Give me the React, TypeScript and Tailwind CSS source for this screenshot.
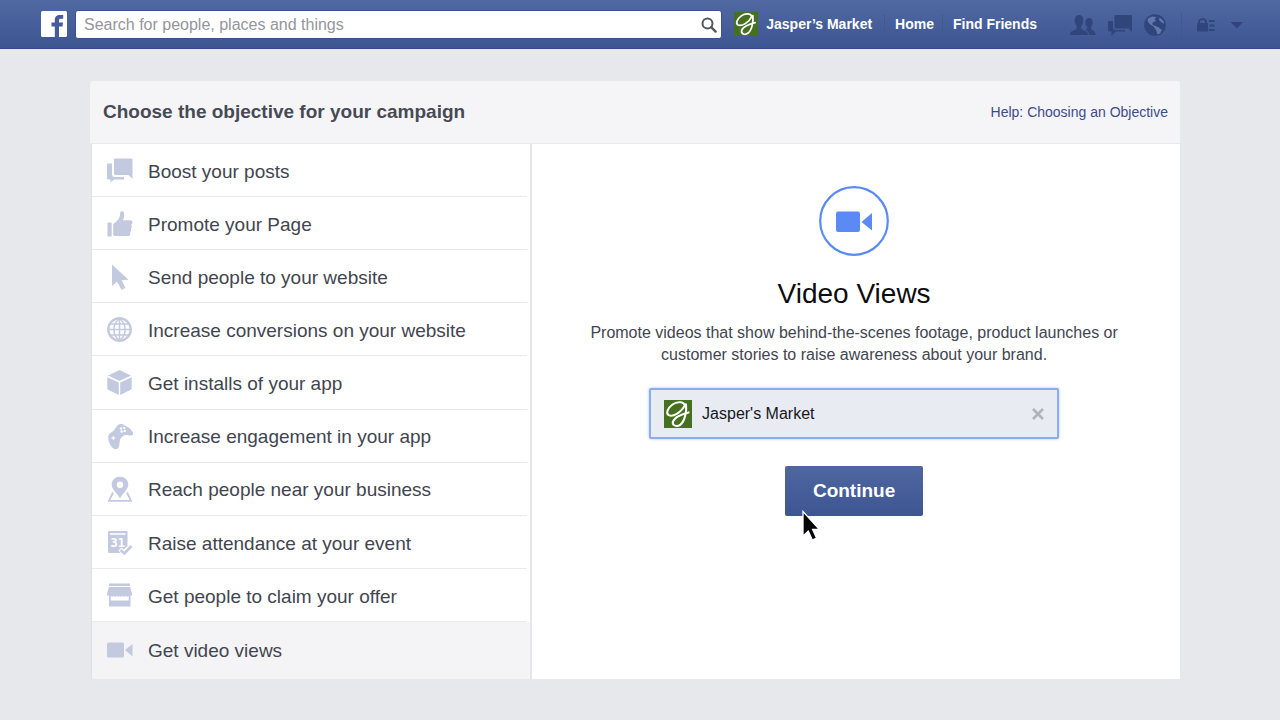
import type { ReactNode } from "react";

function Glyph({ children, className = "h-7 w-7" }: { children: ReactNode; className?: string }) {
  return (
    <svg viewBox="0 0 28 28" className={className} fill="currentColor" aria-hidden="true">
      {children}
    </svg>
  );
}

function MarketLogo({ className }: { className: string }) {
  return (
    <svg viewBox="0 0 28 28" className={className} aria-hidden="true">
      <rect width="28" height="28" fill="#44701f" />
      <path
        d="M20.800 6.200C20.500 1.600 13.500 .8 8.500 4.500C3 8.500 1.800 13.800 4.800 15.200C9 17 17.600 12.400 20.800 5.200"
        fill="none" stroke="#fff" strokeWidth="2" strokeLinecap="round"
      />
      <path
        d="M22 4.300C22.800 11 21 21 16.500 24.600C12.600 27.400 7.800 25.600 9 21.400C10.400 17.400 16 14.600 24.600 12.400"
        fill="none" stroke="#fff" strokeWidth="2.100" strokeLinecap="round"
      />
    </svg>
  );
}

const posts = (
  <Glyph>
    <path d="M8.500 1.500H25.500Q26.500 1.500 26.500 2.500V22L22.500 18H9.500Q8 18 8 16.500V2.500Q8 1.500 8.500 1.500Z" />
    <path d="M2 6.500H6V17.500Q6 20 8.500 20H18V22.500H8L4.500 25.500V22.500H2Q1 22.500 1 21.500V7.500Q1 6.500 2 6.500Z" />
  </Glyph>
);
const thumb = (
  <Glyph>
    <rect x="1.500" y="12.500" width="4.200" height="14" rx=".5" />
    <path d="M7.200 14C11 11.500 14 8 14 4.500C14 1.500 15 .8 16.600 1.300C19 2.500 18.500 7 17 10.200H24.500Q26.700 10.400 26.500 12.500Q26.400 14 25.200 14.700Q26.700 17 25 18.500Q25.700 21 24.200 22.200Q24.800 25.500 22.300 26H8.500L7.200 25Z" />
  </Glyph>
);
const pointer = (
  <Glyph>
    <path d="M6 1.500V23L11 18.500L15.500 26.800L19.500 25L15.600 17.300L22.500 16.800Z" />
  </Glyph>
);
const globe = (
  <Glyph>
    <circle cx="13.500" cy="13.500" r="11.200" fill="none" stroke="currentColor" strokeWidth="2.400" />
    <path d="M13.500 2.500V24.500M2.500 13.500H24.500M4.500 8H22.500M4.500 19H22.500M13.500 2.500C6 8 6 19 13.500 24.500C21 19 21 8 13.500 2.500" fill="none" stroke="currentColor" strokeWidth="1.500" />
  </Glyph>
);
const cube = (
  <Glyph>
    <path d="M13.500 1L25 6.600L13.500 12L2 6.600Z" />
    <path d="M1.300 8.200L12.800 13.500V26L2.200 20.800Q1.300 20.300 1.300 19.300Z" />
    <path d="M25.700 8.200L14.200 13.500V26L24.800 20.800Q25.700 20.300 25.700 19.300Z" />
  </Glyph>
);
const gamepad = (
  <Glyph>
    <path
      fillRule="evenodd"
      d="M11 3C13 .5 16.500 .5 18.500 2.500C22 3.500 26.500 7 27.200 10.500C27 13 24 12.800 21 12C18 11.700 15.500 13.500 14 16.500C13.500 20 13.500 25.500 10.500 26.200C6 26.500 2.500 20 2.300 15.500C1.800 12.500 3.300 10 6 9C8.300 7.500 9.500 5 11 3ZM7 12.500L6.500 14.300L4.700 15L6.500 15.800L7.200 17.600L8.200 15.800L10 15L8.200 14.200Z"
    />
    <g fill="#fff">
      <circle cx="15" cy="5.500" r="1.200" /><circle cx="18.200" cy="5" r="1.200" />
      <circle cx="15.600" cy="8.500" r="1.200" /><circle cx="18.700" cy="8" r="1.200" />
    </g>
  </Glyph>
);
const pin = (
  <Glyph>
    <path fillRule="evenodd" d="M14 .8C9 .8 5.700 4.300 5.700 8.600C5.700 13.800 11.500 17.500 14 22.500C16.500 17.500 22.300 13.800 22.300 8.600C22.300 4.300 19 .8 14 .8ZM14 5.500A3.200 3.200 0 1 1 14 11.900A3.200 3.200 0 1 1 14 5.500Z" />
    <path d="M7 16.500L3 24.800H25L21 16.500" fill="none" stroke="currentColor" strokeWidth="1.800" />
  </Glyph>
);
const calendar = (
  <Glyph>
    <path d="M3 2H20.500Q21.500 2 21.500 3V17L17.500 20.500L15.500 18.500L12.500 21.500L14.500 24H3Q2 24 2 23V3Q2 2 3 2Z" />
    <path d="M14.500 21L18.500 24.500L25.500 17" fill="none" stroke="currentColor" strokeWidth="2.600" />
    <path d="M4 5H19.500" stroke="#fff" strokeWidth="1.600" />
    <text x="4.500" y="18" fill="#fff" fontFamily="DejaVu Sans Mono" fontWeight="700" fontSize="12">31</text>
  </Glyph>
);
const shop = (
  <Glyph>
    <path d="M3 1.500H24V4H3ZM3 5H24L26 11.500V13.500H24.500V24.500H3V13.500H1V11.500Z" />
    <path d="M4.700 14Q6.200 15.500 7.700 14Q9.200 15.500 10.700 14Q12.200 15.500 13.700 14Q15.200 15.500 16.700 14Q18.200 15.500 19.700 14Q21.200 15.500 22.700 14V18.500H4.700Z" fill="#fff" />
  </Glyph>
);
const camera = (
  <Glyph>
    <rect x="1" y="6.500" width="17" height="15" rx="1.500" />
    <path d="M19 14L26.500 8V20.500Z" />
  </Glyph>
);

const objectives: { label: string; icon: ReactNode }[] = [
  { label: "Boost your posts", icon: posts },
  { label: "Promote your Page", icon: thumb },
  { label: "Send people to your website", icon: pointer },
  { label: "Increase conversions on your website", icon: globe },
  { label: "Get installs of your app", icon: cube },
  { label: "Increase engagement in your app", icon: gamepad },
  { label: "Reach people near your business", icon: pin },
  { label: "Raise attendance at your event", icon: calendar },
  { label: "Get people to claim your offer", icon: shop },
  { label: "Get video views", icon: camera },
];

function TopBar() {
  return (
    <header className="flex h-[49px] items-center border-b border-[#344a83] bg-linear-to-b from-[#5069a2] to-[#3d5592] pl-[41px] pr-9">
      <a href="#home" aria-label="Facebook" className="mr-2 shrink-0">
        <svg viewBox="0 0 26 26" className="size-[26px]" aria-hidden="true">
          <rect width="26" height="26" rx="1.500" fill="#fff" />
          <path d="M13.800 26V15.500H10.500V11.500H13.800V9.300C13.800 5.600 15.700 3.900 19 3.900H22.200V7.700H20.200C18.500 7.700 18 8.300 18 9.700V11.500H22L21.500 15.500H18V26Z" fill="#455c98" />
        </svg>
      </a>
      <form role="search" className="flex h-[29px] min-w-0 flex-1 items-center rounded-[3px] border border-[#3b5189] bg-white pl-2 pr-1 pt-px">
        <input
          type="text"
          aria-label="Search"
          placeholder="Search for people, places and things"
          className="min-w-0 flex-1 bg-transparent text-base text-gray-800 outline-none placeholder:text-[#94959d]"
        />
        <button type="button" aria-label="Search" className="text-[#55565f]">
          <svg viewBox="0 0 16 16" className="size-4" fill="none" stroke="currentColor" aria-hidden="true">
            <circle cx="6.500" cy="6.500" r="5" strokeWidth="2" />
            <path d="M10.200 10.200L14.600 14.600" strokeWidth="2.400" strokeLinecap="round" />
          </svg>
        </button>
      </form>
      <nav className="flex shrink-0 items-center text-sm font-bold text-white">
        <a href="#market" className="ml-3 flex items-center gap-2">
          <MarketLogo className="size-6" />
          Jasper’s Market
        </a>
        <a href="#feed" className="ml-3 border-l border-[#42598f] pl-2.5">Home</a>
        <a href="#friends" className="ml-2 border-l border-[#42598f] pl-2.5">Find Friends</a>
      </nav>
      <div className="ml-8 flex shrink-0 items-center pt-0.5 text-[#2f457b]">
        <button type="button" aria-label="Friend requests" className="mr-2.5">
          <svg viewBox="0 0 28 24" className="h-6 w-7" fill="currentColor" aria-hidden="true">
            <path d="M16.300 9.500C16.300 6.500 18 5 20 5S23.700 6.500 23.700 9.500C23.700 11.500 23 13 22 14C22 16.500 22.500 17 24.500 17.800C26 18.500 26.500 19.800 26.500 22H20C20 19 18.500 17.500 16.300 16.500C18 16 18.300 15 18 14C17 13 16.300 11.500 16.300 9.500Z" />
            <path d="M10 2C7.200 2 5.700 4 5.700 7C5.700 10 6.700 12 7.700 13C8 16 7 16.500 4.500 17.500C2 18.500 1 19.500 1 22H19C19 19.500 18 18.500 15.500 17.500C13 16.500 12 16 12.300 13C13.300 12 14.300 10 14.300 7C14.300 4 12.800 2 10 2Z" />
          </svg>
        </button>
        <button type="button" aria-label="Messages" className="mr-2.5">
          <svg viewBox="0 0 26 24" className="h-6 w-[26px]" fill="currentColor" aria-hidden="true">
            <path d="M9 2H24Q25 2 25 3V19L21.500 15.500H9Q7.500 15.500 7.500 14V3.500Q7.500 2 9 2Z" />
            <path d="M2 8H6V15Q6 17 8 17H18V18.500H9L4.500 23V18.500H2Q1 18.500 1 17.500V9Q1 8 2 8Z" />
          </svg>
        </button>
        <button type="button" aria-label="Notifications">
          <svg viewBox="0 0 24 24" className="size-6" aria-hidden="true">
            <circle cx="12" cy="12" r="10.800" fill="currentColor" />
            <path d="M5 5.500L9 3.500L13.500 4L11.500 6L13 8L10.500 9L9 11L11 12.500L15 14L19 17L17 20.500L14.500 21.500L13 17L10.500 13.500L6.500 11L4.500 8ZM16.500 4.500L20.500 8L21 11L18 9L16 7Z" fill="#6278ab" />
          </svg>
        </button>
        <div className="ml-3.5 h-6 border-l border-[#42598f]" />
        <button type="button" aria-label="Privacy" className="ml-3.5 mr-3.5">
          <svg viewBox="0 0 20 16" className="h-4 w-5" aria-hidden="true">
            <rect x="1" y="6" width="11" height="8.500" rx="1" fill="currentColor" />
            <path d="M3 7V5Q3 2.200 6.500 2.200T10 5V7" fill="none" stroke="currentColor" strokeWidth="1.800" />
            <path d="M13 4H18.500M13.500 8.500H18.500M13 13H18.500" stroke="currentColor" strokeWidth="1.800" />
          </svg>
        </button>
        <button type="button" aria-label="Account menu">
          <svg viewBox="0 0 14 8" className="h-2 w-3.5" fill="currentColor" aria-hidden="true">
            <path d="M.5 1H13L7 7.500Z" />
          </svg>
        </button>
      </div>
    </header>
  );
}

export default function App() {
  return (
    <div className="min-h-screen bg-[#e7e8ec] font-['Liberation_Sans',Arial,sans-serif]">
      <TopBar />
      <main className="pb-10 pl-[90px] pr-[100px] pt-8">
        <div className="flex min-h-[63px] items-center justify-between rounded-t-[3px] border-b border-[#e8e9ed] bg-[#f5f5f8] pl-[13px] pr-3">
          <h1 className="text-[19px] font-bold text-[#474a54]">Choose the objective for your campaign</h1>
          <a href="#help" className="text-sm text-[#3c4c88]">Help: Choosing an Objective</a>
        </div>
        <div className="ml-px flex min-h-[535px] border-l border-[#dfe0e5] bg-white">
          <ul className="flex w-2/5 shrink-0 grow-0 flex-col border-r-2 border-[#e6e6ea] pr-[3px] text-[19px] text-[#42454f] box-content">
            {objectives.map(({ label, icon }, i) => {
              const selected = i === objectives.length - 1;
              return (
                <li key={label} className={selected ? "-mr-[3px] h-[57px] bg-[#f4f4f7]" : "flex-1 border-b border-[#e9eaed] pt-0.5"}>
                  <button type="button" aria-pressed={selected} className="flex h-full w-full items-center gap-3.5 pl-3.5 text-left">
                    <span className="text-[#c3cae0]">{icon}</span>
                    <span className="pt-0.5">{label}</span>
                  </button>
                </li>
              );
            })}
          </ul>
          <section className="flex flex-1 flex-col items-center pl-10 pr-11 pt-[42px] text-center">
            <svg viewBox="0 0 70 70" className="size-[70px] text-[#5b8af4]" aria-hidden="true">
              <circle cx="35" cy="35" r="33.800" fill="none" stroke="currentColor" strokeWidth="2.200" />
              <rect x="17" y="25.500" width="24" height="20.500" rx="2" fill="currentColor" />
              <path d="M42.500 36L53 27V44.500Z" fill="currentColor" />
            </svg>
            <h2 className="mt-[22px] text-[28px] leading-8 text-[#0c0d11]">Video Views</h2>
            <p className="mt-3 max-w-[560px] text-base leading-[22px] text-[#42454f]">
              Promote videos that show behind-the-scenes footage, product launches or customer stories to raise awareness about your brand.
            </p>
            <div className="mt-[22px] flex h-[51px] w-full max-w-[410px] items-center rounded-[2px] border-2 border-[#8caced] bg-[#e8ebf2] px-3 shadow-[0_0_3px_#a9c3f7]">
              <MarketLogo className="ml-px size-7" />
              <input aria-label="Page" defaultValue="Jasper's Market" className="ml-2.5 min-w-0 flex-1 bg-transparent text-base text-[#17181c] outline-none" />
              <button type="button" aria-label="Remove page" className="text-[#b1b3ba]">
                <svg viewBox="0 0 14 14" className="size-3.5" aria-hidden="true">
                  <path d="M2 2L12 12M12 2L2 12" stroke="currentColor" strokeWidth="2.600" />
                </svg>
              </button>
            </div>
            <div className="relative mt-[27px]">
              <button type="button" className="h-[50px] w-[138px] rounded-[2px] bg-linear-to-b from-[#4f67a0] to-[#3d5592] text-[19px] font-bold text-white">
                Continue
              </button>
              <svg viewBox="0 0 20 32" className="absolute left-4 top-11 h-8 w-5" aria-hidden="true">
                <path d="M2 1.500V26L7.300 21L11.300 30L15.500 28L11.600 19.500H18.500Z" fill="#050507" stroke="#fff" strokeWidth="1.300" />
              </svg>
            </div>
          </section>
        </div>
      </main>
    </div>
  );
}
